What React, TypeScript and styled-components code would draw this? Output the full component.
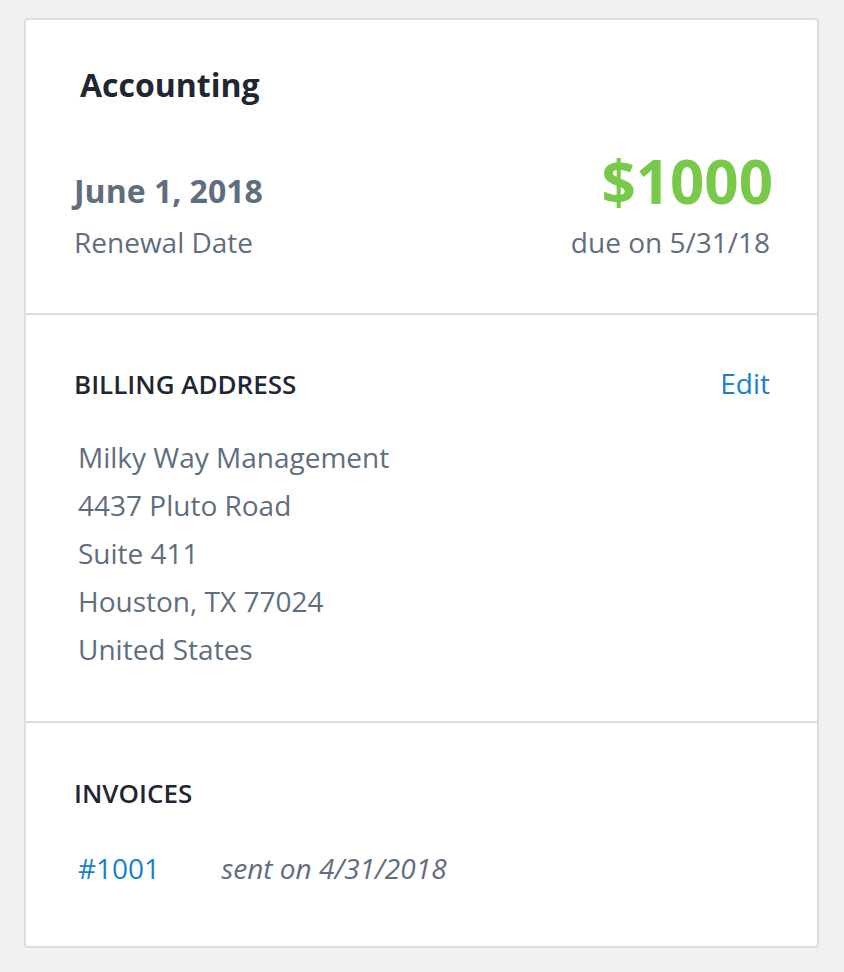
import styled, { createGlobalStyle } from 'styled-components';

const GlobalStyle = createGlobalStyle`
  html, body {
    margin: 0;
    padding: 0;
    background: #f0f1f3;
  }
  body {
    font-family: 'Open Sans', 'Liberation Sans', sans-serif;
    -webkit-font-smoothing: antialiased;
  }
`;

const Page = styled.div`
  padding: 18px 25px 26px 24px;
`;

const Card = styled.div`
  background: #fff;
  border: 2px solid #dcdde0;
  border-radius: 4px;
`;

const Section = styled.section<{ $pad: string }>`
  padding: ${(p) => p.$pad};
  & + & {
    border-top: 2px solid #dcdde0;
  }
`;

const Title = styled.h2`
  margin: 0 0 0 6px;
  font-size: 32px;
  line-height: 44px;
  font-weight: 700;
  color: #1f2733;
`;

const SummaryRow = styled.div`
  display: flex;
  justify-content: space-between;
  align-items: flex-end;
  margin-top: 44px;
`;

const Column = styled.div<{ $right?: boolean }>`
  display: flex;
  flex-direction: column;
  align-items: ${(p) => (p.$right ? 'flex-end' : 'flex-start')};
`;

const DateValue = styled.div`
  font-size: 32px;
  line-height: 40px;
  font-weight: 700;
  color: #5f6e7e;
`;

const Amount = styled.div`
  font-size: 60px;
  line-height: 60px;
  font-weight: 700;
  color: #78c94a;
  margin-right: -3px;
`;

const Caption = styled.div`
  font-size: 28px;
  line-height: 36px;
  color: #5f6e7e;
  margin-top: 13px;
`;

const SectionHeader = styled.div`
  display: flex;
  justify-content: space-between;
  align-items: baseline;
`;

const Heading = styled.h3`
  margin: 0;
  font-size: 26px;
  line-height: 32px;
  font-weight: 600;
  color: #1f2733;
`;

const Link = styled.a`
  font-size: 28px;
  line-height: 32px;
  color: #1a7fcc;
  text-decoration: none;
  cursor: pointer;
`;

const Address = styled.address`
  margin: 33px 0 0 4px;
  font-style: normal;
  font-size: 28px;
  line-height: 48px;
  color: #5f6e7e;
`;

const InvoiceRow = styled.div`
  display: flex;
  align-items: baseline;
  gap: 61px;
  margin: 41px 0 0 4px;
`;

const SentOn = styled.span`
  font-size: 28px;
  line-height: 36px;
  font-style: italic;
  color: #5f6e7e;
`;

const billingLines = [
  'Milky Way Management',
  '4437 Pluto Road',
  'Suite 411',
  'Houston, TX 77024',
  'United States',
];

export default function App() {
  return (
    <>
      <GlobalStyle />
      <Page>
        <Card>
          <Section $pad="43px 47px 53px 48px">
            <Title>Accounting</Title>
            <SummaryRow>
              <Column>
                <DateValue>June 1, 2018</DateValue>
                <Caption>Renewal Date</Caption>
              </Column>
              <Column $right>
                <Amount>$1000</Amount>
                <Caption>due on 5/31/18</Caption>
              </Column>
            </SummaryRow>
          </Section>

          <Section $pad="52px 47px 48px 48px">
            <SectionHeader>
              <Heading>BILLING ADDRESS</Heading>
              <Link>Edit</Link>
            </SectionHeader>
            <Address>
              {billingLines.map((line) => (
                <div key={line}>{line}</div>
              ))}
            </Address>
          </Section>

          <Section $pad="54px 47px 60px 48px">
            <SectionHeader>
              <Heading>INVOICES</Heading>
            </SectionHeader>
            <InvoiceRow>
              <Link>#1001</Link>
              <SentOn>sent on 4/31/2018</SentOn>
            </InvoiceRow>
          </Section>
        </Card>
      </Page>
    </>
  );
}
